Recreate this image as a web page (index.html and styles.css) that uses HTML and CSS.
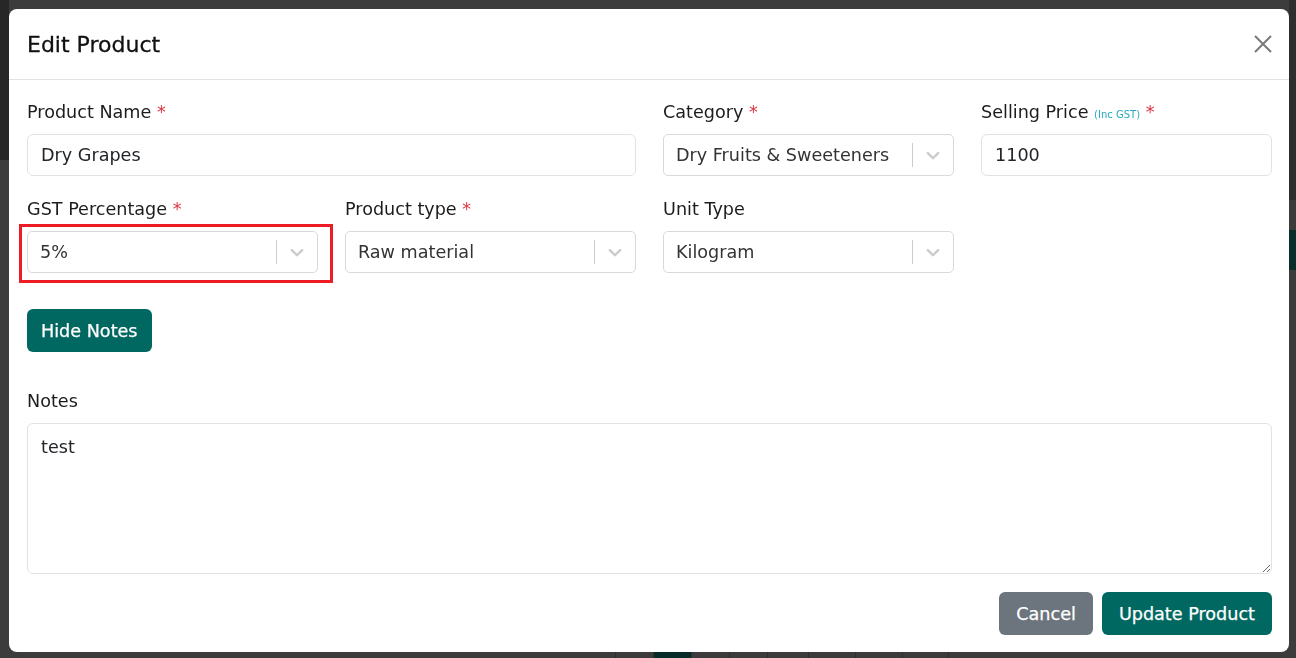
FILE: index.html
```html
<!DOCTYPE html>
<html>
<head>
  <meta charset="utf-8">
  <title>Products</title>
  <link rel="stylesheet" href="styles.css">
</head>
<body>

  <!-- page underneath the dialog (dimmed) -->
  <div class="page">
    <div class="page-left">
      <div class="rail-block"></div>
    </div>
    <div class="page-main">
      <ul class="pager">
        <li>&laquo;</li>
        <li class="active">1</li>
        <li>2</li>
        <li>3</li>
        <li>...</li>
        <li>34</li>
        <li>35</li>
        <li>36</li>
        <li>&raquo;</li>
      </ul>
    </div>
    <div class="page-right">
      <div class="edge-block"></div>
      <div class="edge-button"></div>
    </div>
  </div>

  <div class="modal">
    <div class="modal-dialog">

      <div class="modal-header">
        <h5 class="modal-title">Edit Product</h5>
        <button type="button" class="btn-close" aria-label="Close">
          <svg viewBox="0 0 18 18" width="18" height="18">
            <path d="M1 1 L17 17 M17 1 L1 17" stroke="#7a7a7a" stroke-width="2" fill="none"/>
          </svg>
        </button>
      </div>

      <form class="modal-body">
        <div class="fields">
          <div class="field span-2">
            <label>Product Name <span class="req">*</span></label>
            <input class="input" type="text" value="Dry Grapes">
          </div>

          <div class="field">
            <label>Category <span class="req">*</span></label>
            <div class="select">
              <div class="select-value">Dry Fruits &amp; Sweeteners</div>
              <span class="select-sep"></span>
              <div class="select-arrow">
                <svg viewBox="0 0 20 20"><path d="M4.516 7.548c0.436-0.446 1.043-0.481 1.576 0l3.908 3.747 3.908-3.747c0.533-0.481 1.141-0.446 1.574 0 0.436 0.445 0.408 1.197 0 1.615-0.406 0.418-4.695 4.502-4.695 4.502-0.217 0.223-0.502 0.335-0.787 0.335s-0.57-0.112-0.789-0.335c0 0-4.287-4.084-4.695-4.502s-0.436-1.17 0-1.615z"/></svg>
              </div>
            </div>
          </div>

          <div class="field">
            <label>Selling Price <small class="hint">(Inc GST)</small> <span class="req">*</span></label>
            <input class="input" type="text" value="1100">
          </div>

          <div class="field marked">
            <label>GST Percentage <span class="req">*</span></label>
            <div class="select">
              <div class="select-value">5%</div>
              <span class="select-sep"></span>
              <div class="select-arrow">
                <svg viewBox="0 0 20 20"><path d="M4.516 7.548c0.436-0.446 1.043-0.481 1.576 0l3.908 3.747 3.908-3.747c0.533-0.481 1.141-0.446 1.574 0 0.436 0.445 0.408 1.197 0 1.615-0.406 0.418-4.695 4.502-4.695 4.502-0.217 0.223-0.502 0.335-0.787 0.335s-0.57-0.112-0.789-0.335c0 0-4.287-4.084-4.695-4.502s-0.436-1.17 0-1.615z"/></svg>
              </div>
              <span class="mark-box"></span>
            </div>
          </div>

          <div class="field">
            <label>Product type <span class="req">*</span></label>
            <div class="select">
              <div class="select-value">Raw material</div>
              <span class="select-sep"></span>
              <div class="select-arrow">
                <svg viewBox="0 0 20 20"><path d="M4.516 7.548c0.436-0.446 1.043-0.481 1.576 0l3.908 3.747 3.908-3.747c0.533-0.481 1.141-0.446 1.574 0 0.436 0.445 0.408 1.197 0 1.615-0.406 0.418-4.695 4.502-4.695 4.502-0.217 0.223-0.502 0.335-0.787 0.335s-0.57-0.112-0.789-0.335c0 0-4.287-4.084-4.695-4.502s-0.436-1.17 0-1.615z"/></svg>
              </div>
            </div>
          </div>

          <div class="field">
            <label>Unit Type</label>
            <div class="select">
              <div class="select-value">Kilogram</div>
              <span class="select-sep"></span>
              <div class="select-arrow">
                <svg viewBox="0 0 20 20"><path d="M4.516 7.548c0.436-0.446 1.043-0.481 1.576 0l3.908 3.747 3.908-3.747c0.533-0.481 1.141-0.446 1.574 0 0.436 0.445 0.408 1.197 0 1.615-0.406 0.418-4.695 4.502-4.695 4.502-0.217 0.223-0.502 0.335-0.787 0.335s-0.57-0.112-0.789-0.335c0 0-4.287-4.084-4.695-4.502s-0.436-1.17 0-1.615z"/></svg>
              </div>
            </div>
          </div>
        </div>

        <button type="button" class="btn btn-teal btn-notes">Hide Notes</button>

        <div class="field notes">
          <label>Notes</label>
          <textarea class="input textarea">test</textarea>
        </div>
      </form>

      <div class="modal-footer">
        <button type="button" class="btn btn-gray">Cancel</button>
        <button type="button" class="btn btn-teal">Update Product</button>
      </div>

    </div>
  </div>

</body>
</html>
```

FILE: styles.css
```css
html, body { margin:0; height:100%; }
body { background:#3c3c3c; font-family:"DejaVu Sans", "Noto Sans", sans-serif; color:#212529; overflow:hidden; }

/* dimmed page behind the dialog */
.page { display:grid; grid-template-columns:9px 1fr 7px; height:100%; }
.page-left .rail-block { height:160px; background:#272727; }
.page-right .edge-block { height:200px; background:#2e2e2e; }
.page-right .edge-button { height:40px; margin-top:30px; background:#0b2d2a; }

.page-main { display:flex; flex-direction:column; justify-content:flex-end; }
.pager { display:flex; list-style:none; margin:0 0 -30px 606px; padding:0; }
.pager li { height:36px; padding:6px 12px 0; box-sizing:border-box; border-left:1px solid #303030;
            color:#161616; font-size:17px; min-width:38px; text-align:center; }
.pager li.active { background:#062a27; color:#3c3c3c; }

/* dialog */
.modal { position:fixed; inset:0; padding:9px 7px 6px 9px; display:flex; }
.modal-dialog { flex:1; background:#fff; border-radius:8px; display:flex; flex-direction:column; overflow:hidden; }

.modal-header { flex-shrink:0; height:71px; box-sizing:border-box; border-bottom:1px solid #e2e2e2;
                padding:0 17px 0 18px; display:flex; align-items:center; justify-content:space-between; }
.modal-title { margin:0; font-size:22px; font-weight:500; line-height:33px; color:#111; -webkit-text-stroke:0.3px #111; }
.btn-close { border:none; background:none; padding:0; width:18px; height:18px; cursor:pointer; display:block; }
.btn-close svg { display:block; }

.modal-body { flex-shrink:0; padding:20px 17px 0 18px; display:flex; flex-direction:column; align-items:stretch; margin:0; }

.fields { display:grid; grid-template-columns:repeat(4, 1fr); column-gap:27px; row-gap:21px; }
.field.span-2 { grid-column:span 2; }
.field.marked { grid-column:1; }

.field label { display:block; font-size:17.6px; line-height:24px; height:24px; margin-bottom:10px; color:#1c1c1c; white-space:nowrap; }
.req { color:#e03444; }
.hint { font-size:10px; line-height:1; color:#26a9bd; }

.input { display:block; width:100%; box-sizing:border-box; height:42px; border:1px solid #dfe2e6; border-radius:6px;
         padding:0 13px; font:inherit; font-size:17.6px; color:#212529; background:#fff; outline:none; }
.textarea { height:151px; padding:10px 13px 7px; line-height:26.4px; resize:vertical; }

/* react-select style dropdown */
.select { position:relative; display:flex; align-items:center; height:42px; box-sizing:border-box;
          border:1px solid #d9d9d9; border-radius:5px; background:#fff; }
.select-value { flex:1; padding:0 12px; font-size:17.6px; color:#333; white-space:nowrap; overflow:hidden; }
.select-sep { align-self:stretch; width:1px; margin:8px 0; background:#cccccc; }
.select-arrow { width:40px; display:flex; align-items:center; justify-content:center; }
.select-arrow svg { width:22px; height:22px; fill:#cccccc; display:block; }

/* red highlight drawn round the GST control */
.mark-box { position:absolute; left:-9px; top:-8px; right:-16px; bottom:-11px; border:3px solid #ed1c24; pointer-events:none; }

.btn { height:43px; padding:0 15px; border:none; border-radius:6px; font:inherit; font-size:17.6px; color:#fff; cursor:pointer;
       -webkit-text-stroke:0.25px #fff; }
.btn-teal { background:#006861; }
.btn-gray { background:#6c757d; }
.btn-notes { align-self:flex-start; margin-top:36px; padding:0 14px; }

.field.notes { margin-top:37px; }

.modal-footer { flex-shrink:0; display:flex; justify-content:flex-end; gap:9px; padding:18px 17px 17px 18px; }
.modal-footer .btn-gray { padding:0 17px; }
.modal-footer .btn-teal { padding:0 17px; }
```
